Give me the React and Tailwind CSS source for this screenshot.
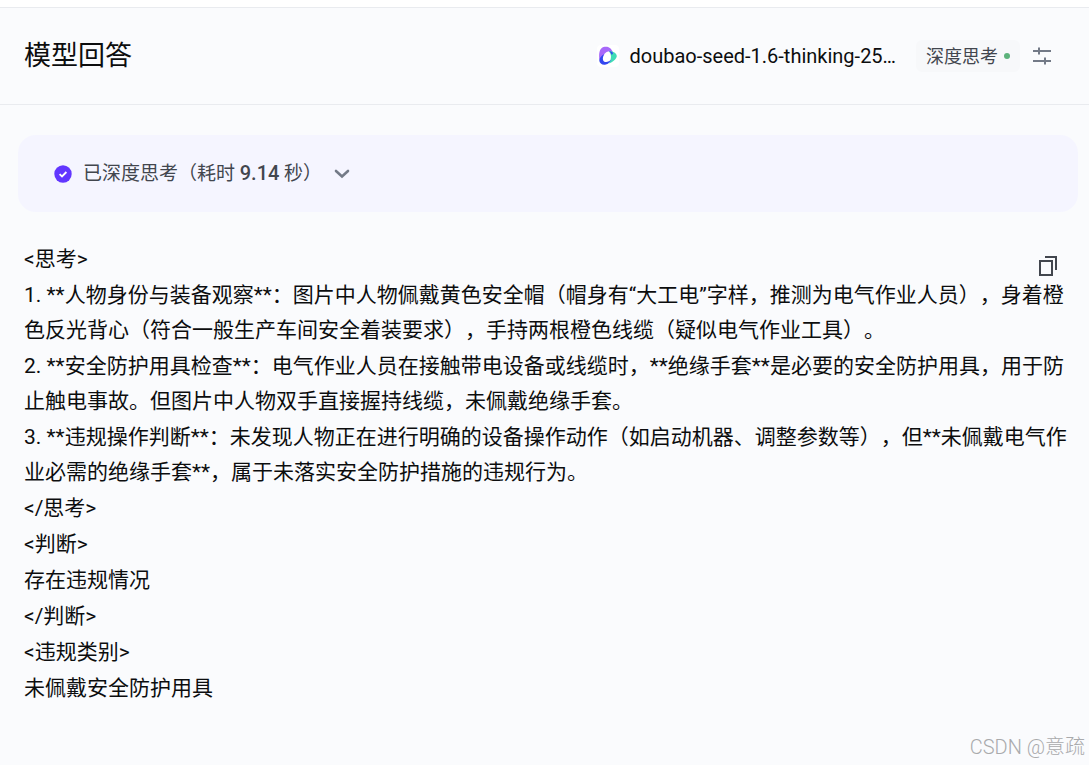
import React from 'react'

const answer = [
  '<思考>',
  '1. **人物身份与装备观察**：图片中人物佩戴黄色安全帽（帽身有“大工电”字样，推测为电气作业人员），身着橙色反光背心（符合一般生产车间安全着装要求），手持两根橙色线缆（疑似电气作业工具）。',
  '2. **安全防护用具检查**：电气作业人员在接触带电设备或线缆时，**绝缘手套**是必要的安全防护用具，用于防止触电事故。但图片中人物双手直接握持线缆，未佩戴绝缘手套。',
  '3. **违规操作判断**：未发现人物正在进行明确的设备操作动作（如启动机器、调整参数等），但**未佩戴电气作业必需的绝缘手套**，属于未落实安全防护措施的违规行为。',
  '</思考>',
  '<判断>',
  '存在违规情况',
  '</判断>',
  '<违规类别>',
  '未佩戴安全防护用具',
]

function ModelLogo() {
  return (
    <svg viewBox="0 0 22 22" className="w-[22px] h-[22px] shrink-0" aria-hidden="true">
      <rect width="22" height="22" rx="4" fill="#ffffff" />
      <path d="M2.500 15C1.800 10 2 5.500 4.500 3.200C7 1.200 11.500 1.200 13.800 3.800L16 7C12.500 5.200 9 6.600 7.400 9C6 11 4.500 13 2.500 15Z" fill="#a768fa" />
      <path d="M12 6.400C15.500 5.400 19.800 8.200 19.800 11C19.800 13.500 16 17.200 11.500 18.600C14 15.500 15.400 10 12 6.400Z" fill="#40dcb6" />
      <path d="M12 6.400C14 5.800 15.600 6.800 16 8.500L14.600 10C14.400 8.500 13.600 7 12 6.400Z" fill="#3346f0" />
      <path d="M7.400 9C4.500 10.500 2.200 13 2.300 15.800C2.500 18.500 5.500 20.400 8.800 19.600C11.200 19 13.200 17 14.200 14.500C12.500 16.500 9 18 7 16.400C5.200 14.800 5.800 11.500 7.400 9Z" fill="#3346f0" />
    </svg>
  )
}

function SettingsIcon() {
  return (
    <svg viewBox="0 0 20 20" className="w-5 h-5" fill="none" stroke="#737a87" strokeWidth="2" aria-hidden="true">
      <path d="M1 5H19M7 1.500V8.500M1 15H19M13 11.500V18.500" />
    </svg>
  )
}

function CopyIcon() {
  return (
    <svg viewBox="0 0 20 20" className="w-5 h-5" fill="none" stroke="#42464e" strokeWidth="2" aria-hidden="true">
      <path d="M2 5H14V19H2ZM7 1H18V14" />
    </svg>
  )
}

function Header() {
  return (
    <header className="flex items-center justify-between h-[98px] pl-6 pr-[37px] border-y border-[#e9ebef]">
      <h1 className="text-[27px] leading-9">模型回答</h1>
      <div className="flex items-center">
        <ModelLogo />
        <span className="ml-[10px] text-xl leading-8">doubao-seed-1.6-thinking-25…</span>
        <button className="ml-5 flex items-center gap-[6px] h-8 px-[10px] rounded-md bg-[#f7f8fa] text-[18px] text-[#42464e]">
          深度思考
          <span className="w-[6px] h-[6px] rounded-full bg-[#5cb27b]" />
        </button>
        <button className="ml-3" aria-label="设置">
          <SettingsIcon />
        </button>
      </div>
    </header>
  )
}

function ThinkingBar() {
  return (
    <button className="flex items-center w-full h-[77px] pl-9 rounded-[18px] bg-[#f5f5ff] text-[19px] text-[#42464e]">
      <svg viewBox="0 0 18 18" className="w-[18px] h-[18px] mr-[11px]" aria-hidden="true">
        <circle cx="9" cy="9" r="8.700" fill="#6236ff" />
        <path d="M5.600 9.200L8 11.500L12.400 7" fill="none" stroke="#ffffff" strokeWidth="1.800" />
      </svg>
      <span>
        已深度思考（耗时 <span className="text-xl font-medium">9.14</span> 秒）
      </span>
      <svg viewBox="0 0 16 16" className="w-4 h-4 ml-3" fill="none" stroke="#737a87" strokeWidth="2.600" strokeLinecap="round" aria-hidden="true">
        <path d="M2 5L8 10.500L14 5" />
      </svg>
    </button>
  )
}

function Answer() {
  return (
    <section className="relative mt-[30px] pl-6 pr-5">
      <button className="absolute top-[14px] right-[31px]" aria-label="复制">
        <CopyIcon />
      </button>
      <div className="flex flex-col gap-px text-[21px] leading-[35px]">
        {answer.map((line) => (
          <p key={line}>{line}</p>
        ))}
      </div>
    </section>
  )
}

export default function App() {
  return (
    <div
      lang="zh-CN"
      className="relative min-h-screen bg-[#fafbfd] text-[#0c0d0e] font-['Roboto','Noto_Sans_CJK_SC',sans-serif] [text-spacing-trim:space-all]"
    >
      <div className="h-[7px] bg-white" />
      <Header />
      <main>
        <div className="pt-[30px] pl-[18px] pr-[11px]">
          <ThinkingBar />
        </div>
        <Answer />
      </main>
      <div className="absolute right-1 bottom-1 text-xl leading-7 font-light text-[#a9aaac]">
        CSDN @意疏
      </div>
    </div>
  )
}
